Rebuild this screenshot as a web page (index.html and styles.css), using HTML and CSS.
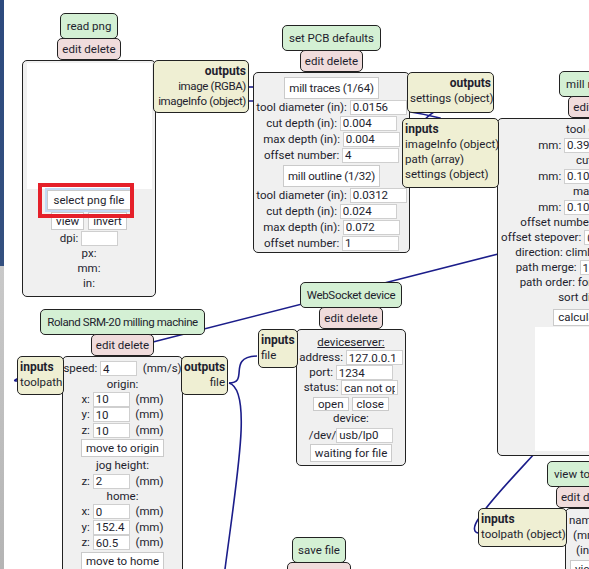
FILE: index.html
```html
<!DOCTYPE html>
<html>
<head>
<meta charset="utf-8">
<link rel="stylesheet" href="styles.css">
</head>
<body>
<div class="canvas">
  <svg class="links" width="589" height="569" viewBox="0 0 589 569">
    <path d="M249 87 L262 87" />
    <path d="M249 101 C 340 101, 400 108, 440 118 C 470 160, 480 190, 600 240" />
    <path d="M494 100 C 460 100, 440 104, 424 120" />
    <path d="M600 228 L153 342 C 80 360, 0 381, 17 381" />
    <path d="M229 383 C 250 383, 226 357, 257 356" />
    <path d="M229 383 C 252 390, 238 470, 225 569" />
    <path d="M545 442 C 520 470, 490 500, 479 518 C 472 528, 474 533, 479 533" />
  </svg>

  <!-- read png -->
  <div class="module m-readpng">
    <div class="title">read png</div>
    <div class="edit">edit delete</div>
    <div class="panel">
      <div class="outputs">
        <div class="hd">outputs</div>
        <div>image (RGBA)</div>
        <div>imageInfo (object)</div>
      </div>
      <div class="view-area va-read"></div>
      <div class="row row-focus"><button class="btn btn-focus">select png file</button></div>
      <div class="row row-pair gap4"><button class="btn btn-sm">view</button><button class="btn btn-sm">invert</button></div>
      <div class="row">dpi:&nbsp;<input class="field w37" value=""></div>
      <div class="line">px:</div>
      <div class="line">mm:</div>
      <div class="line">in:</div>
    </div>
  </div>

  <!-- set PCB defaults -->
  <div class="module m-setpcb">
    <div class="title">set PCB defaults</div>
    <div class="edit">edit delete</div>
    <div class="panel">
      <div class="outputs">
        <div class="hd">outputs</div>
        <div>settings (object)</div>
      </div>
      <div class="row row-btn"><button class="btn btn-lg">mill traces (1/64)</button></div>
      <div class="row">tool diameter (in):&nbsp;<input class="field w57" value="0.0156"></div>
      <div class="row">cut depth (in):&nbsp;<input class="field w57" value="0.004"></div>
      <div class="row">max depth (in):&nbsp;<input class="field w57" value="0.004"></div>
      <div class="row">offset number:&nbsp;<input class="field w57" value="4"></div>
      <div class="row row-btn row-btn2"><button class="btn btn-lg">mill outline (1/32)</button></div>
      <div class="row">tool diameter (in):&nbsp;<input class="field w57" value="0.0312"></div>
      <div class="row">cut depth (in):&nbsp;<input class="field w57" value="0.024"></div>
      <div class="row">max depth (in):&nbsp;<input class="field w57" value="0.072"></div>
      <div class="row">offset number:&nbsp;<input class="field w57" value="1"></div>
    </div>
  </div>

  <!-- mill raster 2D -->
  <div class="module m-mill">
    <div class="title">mill raster 2D</div>
    <div class="edit">edit delete</div>
    <div class="panel">
      <div class="inputs">
        <div class="hd">inputs</div>
        <div>imageInfo (object)</div>
        <div>path (array)</div>
        <div>settings (object)</div>
      </div>
      <div class="line">tool diameter</div>
      <div class="row">mm:&nbsp;<input class="field w40" value="0.396">&nbsp;in:&nbsp;<input class="field w40" value="0.0156"></div>
      <div class="line">cut depth</div>
      <div class="row">mm:&nbsp;<input class="field w40" value="0.101">&nbsp;in:&nbsp;<input class="field w40" value="0.004"></div>
      <div class="line">max depth</div>
      <div class="row">mm:&nbsp;<input class="field w40" value="0.101">&nbsp;in:&nbsp;<input class="field w40" value="0.004"></div>
      <div class="row row-t">offset number:&nbsp;<input class="field w40" value="4">&nbsp;(0 = fill)</div>
      <div class="row row-t">offset stepover:&nbsp;<input class="field w40" value="0.5">&nbsp;(1 = diameter)</div>
      <div class="line">direction: climb ◉ conventional ○</div>
      <div class="row row-t">path merge:&nbsp;<input class="field w40" value="1">&nbsp;(x diameter)</div>
      <div class="line">path order: forward ◉ reverse ○</div>
      <div class="line">sort distance: ☑</div>
      <div class="row row-calc gap4"><button class="btn btn-md">calculate</button><button class="btn btn-md">view</button></div>
      <div class="view-area va-mill"></div>
    </div>
  </div>

  <!-- Roland SRM-20 -->
  <div class="module m-roland">
    <div class="title">Roland SRM-20 milling machine</div>
    <div class="edit">edit delete</div>
    <div class="panel">
      <div class="inputs">
        <div class="hd">inputs</div>
        <div>toolpath</div>
      </div>
      <div class="outputs">
        <div class="hd">outputs</div>
        <div>file</div>
      </div>
      <div class="row">speed:&nbsp;<input class="field w37" value="4">&nbsp;&nbsp;(mm/s)</div>
      <div class="line">origin:</div>
      <div class="row">x:&nbsp;<input class="field w37" value="10">&nbsp;&nbsp;(mm)</div>
      <div class="row">y:&nbsp;<input class="field w37" value="10">&nbsp;&nbsp;(mm)</div>
      <div class="row">z:&nbsp;<input class="field w37" value="10">&nbsp;&nbsp;(mm)</div>
      <div class="row row-move"><button class="btn btn-md2">move to origin</button></div>
      <div class="line">jog height:</div>
      <div class="row">z:&nbsp;<input class="field w37" value="2">&nbsp;&nbsp;(mm)</div>
      <div class="line">home:</div>
      <div class="row">x:&nbsp;<input class="field w37" value="0">&nbsp;&nbsp;(mm)</div>
      <div class="row">y:&nbsp;<input class="field w37" value="152.4">&nbsp;&nbsp;(mm)</div>
      <div class="row">z:&nbsp;<input class="field w37" value="60.5">&nbsp;&nbsp;(mm)</div>
      <div class="row row-move"><button class="btn btn-md2">move to home</button></div>
    </div>
  </div>

  <!-- WebSocket device -->
  <div class="module m-ws">
    <div class="title">WebSocket device</div>
    <div class="edit">edit delete</div>
    <div class="panel">
      <div class="inputs">
        <div class="hd">inputs</div>
        <div>file</div>
      </div>
      <div class="line"><u>deviceserver:</u></div>
      <div class="row">address:&nbsp;<input class="field w57" value="127.0.0.1"></div>
      <div class="row">port:&nbsp;<input class="field w57" value="1234"></div>
      <div class="row">status:&nbsp;<input class="field w57" value="can not open"></div>
      <div class="row row-oc gap3"><button class="btn btn-sm">open</button><button class="btn btn-sm">close</button></div>
      <div class="line">device:</div>
      <div class="row row-dev">/dev/<input class="field w57" value="usb/lp0"></div>
      <div class="row row-wait"><button class="btn btn-md2">waiting for file</button></div>
    </div>
  </div>

  <!-- view toolpath -->
  <div class="module m-view">
    <div class="title">view toolpath</div>
    <div class="edit">edit delete</div>
    <div class="panel">
      <div class="inputs">
        <div class="hd">inputs</div>
        <div>toolpath (object)</div>
      </div>
      <div class="vline">name:</div>
      <div class="vline ind1">(mm)</div>
      <div class="vline ind2">(in)</div>
      <div class="vline ind0"><button class="btn btn-md">view</button></div>
    </div>
  </div>

  <!-- save file -->
  <div class="module m-save">
    <div class="title">save file</div>
    <div class="edit">edit delete</div>
    <div class="panel panel-save"></div>
  </div>

  <div class="highlight"></div>
</div>
</body>
</html>
```

FILE: styles.css
```css
html, body {
  margin: 0;
  padding: 0;
  width: 589px;
  height: 569px;
  overflow: hidden;
}

body {
  background:
    linear-gradient(#2d4a7e, #34507f) 0 0 / 4px 266px no-repeat,
    linear-gradient(#c9c9c9, #b4b4b4) 0 266px / 4px 303px no-repeat,
    #ffffff;
  font-family: Roboto, "Liberation Sans", sans-serif;
  font-size: 11.5px;
  color: #1e1e2e;
}

.canvas {
  position: relative;
  width: 589px;
  height: 569px;
  overflow: hidden;
}

.links {
  position: absolute;
  left: 0;
  top: 0;
}

.links path {
  fill: none;
  stroke: #1b1d8a;
  stroke-width: 1.6;
}

.module {
  position: absolute;
  display: flex;
  flex-direction: column;
  align-items: center;
}

.title {
  box-sizing: border-box;
  height: 26px;
  line-height: 24px;
  padding: 0 6px;
  background: #d4f0d4;
  border: 1px solid #222;
  border-radius: 5px;
  white-space: nowrap;
}

.edit {
  box-sizing: border-box;
  height: 22px;
  line-height: 20px;
  margin-top: -1px;
  padding: 0 4px;
  background: #f0dcdc;
  border: 1px solid #222;
  border-radius: 5px;
  white-space: nowrap;
}

.panel {
  position: relative;
  box-sizing: border-box;
  align-self: stretch;
  background: #f0f0f0;
  border: 1px solid #222;
  border-radius: 5px;
  text-align: center;
  line-height: 15px;
}

.inputs,
.outputs {
  position: absolute;
  top: -1px;
  box-sizing: border-box;
  padding: 3px 2px 4px;
  background: #efefd3;
  border: 1px solid #222;
  border-radius: 5px;
  line-height: 15px;
  white-space: nowrap;
  z-index: 2;
}

.outputs {
  left: calc(100% - 2px);
  text-align: right;
}

.inputs {
  right: calc(100% - 1px);
  text-align: left;
}

.hd {
  font-weight: bold;
  font-size: 12px;
}

.row {
  display: flex;
  justify-content: center;
  align-items: center;
  height: 16px;
  white-space: nowrap;
}

.line {
  height: 15px;
  white-space: nowrap;
}

.gap4 { gap: 4px; }
.gap3 { gap: 3px; }

.field {
  box-sizing: border-box;
  height: 15px;
  margin: 0;
  padding: 0 2px;
  border: 1px solid #cfcfcf;
  background: #fff;
  font: inherit;
  line-height: 13px;
  color: inherit;
  outline: none;
}

.w37 { width: 37px; }
.w40 { width: 40px; }
.w57 { width: 57px; }

.btn {
  box-sizing: border-box;
  margin: 0;
  padding: 0 4px;
  background: #fff;
  border: 1px solid #cacaca;
  border-radius: 0;
  font: inherit;
  color: inherit;
  line-height: 14px;
  white-space: nowrap;
}

.btn-sm { height: 17px; }
.btn-md { height: 17px; }
.btn-md2 { height: 18px; }
.btn-lg { height: 22px; padding: 0 4px; letter-spacing: -0.2px; }

.btn-focus {
  height: 20px;
  padding: 0 6px;
  box-shadow: 0 0 0 2px #c3daf5;
}

.view-area {
  background: #fff;
  margin: 0 auto;
}

/* read png */
.m-readpng { left: 22px; top: 13px; width: 134px; }
.m-readpng .panel { height: 237px; padding-top: 2px; }
.m-readpng .outputs { width: 96px; height: 53px; letter-spacing: -0.35px; }
.m-readpng .outputs .hd { letter-spacing: 0; }
.m-readpng .row { height: 15px; }
.m-readpng .row-focus { height: 20px; margin-top: 1px; }
.m-readpng .row-pair { height: 18px; margin-top: 2px; margin-bottom: 1px; }
.m-readpng .row-pair .btn { height: 18px; }
.va-read { width: 125px; height: 126px; }

/* set PCB defaults */
.m-setpcb { left: 253px; top: 25px; width: 157px; }
.m-setpcb .panel { height: 181px; padding-top: 4px; }
.m-setpcb .outputs { width: 87px; height: 41px; }
.m-setpcb .row-btn { height: 22px; }
.m-setpcb .row-btn2 { margin-top: 2px; height: 22px; }

/* mill raster */
.m-mill { left: 497px; top: 71px; width: 206px; }
.m-mill .panel { height: 338px; padding-top: 3px; }
.m-mill .inputs { width: 97px; height: 70px; }
.m-mill .row-t { height: 15px; }
.m-mill .row-calc { height: 18px; margin-top: 3px; }
.va-mill { width: 130px; height: 124px; margin-top: 1px; }

/* Roland */
.m-roland { left: 62px; top: 309px; width: 121px; }
.m-roland .title { letter-spacing: -0.4px; }
.m-roland .panel { height: 240px; padding-top: 4px; }
.m-roland .inputs { width: 47px; height: 39px; }
.m-roland .outputs { width: 47px; height: 39px; left: calc(100% - 1px); }
.m-roland .row { height: 15.6px; }
.m-roland .row-move { height: 18px; margin-top: 1px; margin-bottom: 1px; }

/* WebSocket */
.m-ws { left: 296px; top: 282px; width: 110px; }
.m-ws .title { letter-spacing: -0.3px; }
.m-ws .panel { height: 137px; padding-top: 5px; }
.m-ws .inputs { width: 40px; height: 39px; }
.m-ws .row { height: 15px; }
.m-ws .row-oc { height: 14px; margin-top: 2px; }
.m-ws .row-oc .btn { height: 14px; line-height: 12px; }
.m-ws .row-dev { height: 16px; margin-top: 1px; }
.m-ws .row-wait { height: 18px; margin-top: 1px; }

/* view toolpath */
.m-view { left: 565px; top: 461px; width: 150px; align-items: flex-start; }
.m-view .title { margin-left: -18px; }
.m-view .edit { margin-left: -9px; }
.m-view .panel { height: 120px; padding-top: 4px; text-align: left; padding-left: 3px; }
.m-view .inputs { width: 89px; height: 39px; }
.vline { height: 15px; white-space: nowrap; }
.ind1 { padding-left: 4px; }
.ind2 { padding-left: 7px; }
.ind0 { padding-left: 1px; margin-top: 2px; }

/* save file */
.m-save { left: 269px; top: 537px; width: 100px; }
.m-save .title { padding: 0 5px; }
.panel-save { height: 60px; }

.highlight {
  position: absolute;
  left: 38px;
  top: 183px;
  width: 96px;
  height: 35px;
  box-sizing: border-box;
  border: 4px solid #e5202a;
  z-index: 5;
}
```
